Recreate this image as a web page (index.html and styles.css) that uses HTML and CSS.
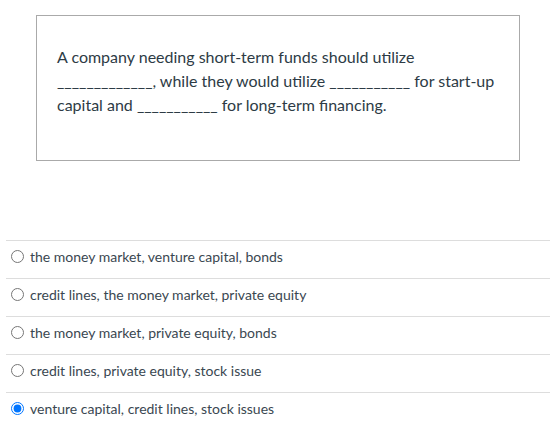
FILE: index.html
```html
<!DOCTYPE html>
<html>
<head>
<meta charset="utf-8">
<link rel="stylesheet" href="styles.css">
</head>
<body>
<div class="page">
  <div class="question">
    <p class="q-text">A company needing short-term funds should utilize _____________, while they would utilize ___________ for start-up capital and ___________ for long-term financing.</p>
  </div>
  <div class="answers">
    <label class="answer"><input type="radio" name="a"><span>the money market, venture capital, bonds</span></label>
    <label class="answer"><input type="radio" name="a"><span>credit lines, the money market, private equity</span></label>
    <label class="answer"><input type="radio" name="a"><span>the money market, private equity, bonds</span></label>
    <label class="answer"><input type="radio" name="a"><span>credit lines, private equity, stock issue</span></label>
    <label class="answer"><input type="radio" name="a" checked><span>venture capital, credit lines, stock issues</span></label>
  </div>
</div>
</body>
</html>
```

FILE: styles.css
```css
html, body {
  margin: 0;
  padding: 0;
  background: #fff;
}
body {
  font-family: Lato, "Liberation Sans", sans-serif;
  color: #2d3b45;
}
.page {
  padding: 15px 3px 0 6px;
}
.question {
  margin-left: 30px;
  width: 482px;
  height: 144px;
  border: 1px solid #aaaaaa;
  box-sizing: content-box;
}
.q-text {
  margin: 0;
  padding: 29px 20px 0 20px;
  font-size: 16px;
  line-height: 24px;
}
.answers {
  margin-top: 79px;
}
.answer {
  display: flex;
  align-items: center;
  box-sizing: border-box;
  height: 38px;
  padding-bottom: 7px;
  border-top: 1px solid #dddddd;
  font-size: 14px;
  color: #3a4751;
  cursor: pointer;
}
.answer input {
  margin: 0 6px 0 5px;
  width: 13px;
  height: 13px;
}
```
